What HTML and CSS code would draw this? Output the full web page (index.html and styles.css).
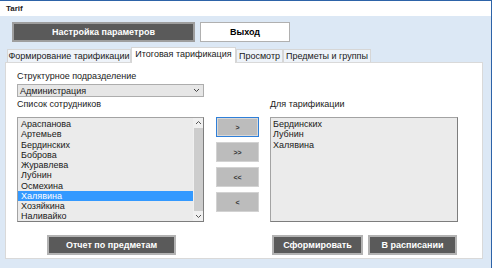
FILE: index.html
```html
<!doctype html>
<html lang="ru">
<head>
	<meta charset="UTF-8">
	<title>Tarif</title>
	<link rel="stylesheet" href="styles.css">
</head>
<body>
	<div class="window">
		<div class="titlebar">Tarif</div>
		<div class="toolbar">
			<span class="btn dark settings">Настройка параметров</span>
			<span class="btn exit">Выход</span>
		</div>
		<ul class="tabs">
			<li class="t1">Формирование тарификации</li>
			<li class="t2 active">Итоговая тарификация</li>
			<li class="t3">Просмотр</li>
			<li class="t4">Предметы и группы</li>
		</ul>
		<div class="panel">
			<p class="label">Структурное подразделение</p>
			<div class="combo">
				<span>Администрация</span>
				<svg width="7" height="5" viewBox="0 0 7 5"><polyline points="1,1 3.5,3.5 6,1" fill="none" stroke="#444" stroke-width="1"/></svg>
			</div>
			<div class="lists">
				<div class="col">
					<p class="label">Список сотрудников</p>
					<div class="listbox left">
						<ul class="items">
							<li>Араспанова</li>
							<li>Артемьев</li>
							<li>Бердинских</li>
							<li>Боброва</li>
							<li>Журавлева</li>
							<li>Лубнин</li>
							<li>Осмехина</li>
							<li class="sel">Халявина</li>
							<li>Хозяйкина</li>
							<li>Наливайко</li>
						</ul>
						<div class="scroll">
							<svg width="9" height="9" viewBox="0 0 9 9"><polyline points="2,6 4.5,3.5 7,6" fill="none" stroke="#555" stroke-width="1"/></svg>
							<div class="thumb"></div>
							<svg width="9" height="9" viewBox="0 0 9 9"><polyline points="2,3 4.5,5.5 7,3" fill="none" stroke="#555" stroke-width="1"/></svg>
						</div>
					</div>
				</div>
				<div class="moves">
					<span class="mv focus">&gt;</span>
					<span class="mv">&gt;&gt;</span>
					<span class="mv">&lt;&lt;</span>
					<span class="mv">&lt;</span>
				</div>
				<div class="col">
					<p class="label">Для тарификации</p>
					<div class="listbox right">
						<ul class="items">
							<li>Бердинских</li>
							<li>Лубнин</li>
							<li>Халявина</li>
						</ul>
					</div>
				</div>
			</div>
			<div class="actions">
				<span class="btn dark report">Отчет по предметам</span>
				<span class="btn dark make">Сформировать</span>
				<span class="btn dark sched">В расписании</span>
			</div>
		</div>
	</div>
</body>
</html>
```

FILE: styles.css
```css
html, body, div, p, ul, li, span {
	margin: 0;
	padding: 0;
}
body {
	background-color: #fff;
	font-family: "Liberation Sans", Arial, sans-serif;
	font-size: 9px;
	color: #1a1a1a;
}
ul {
	list-style: none;
}
.window {
	width: 491px;
	height: 268px;
	border-right: 1px solid #2d63a8;
	background-color: #dce8f5;
}
.titlebar {
	height: 15px;
	line-height: 15px;
	padding-left: 6px;
	border-top: 1px solid #2d63a8;
	font-size: 8px;
	font-weight: bold;
	color: #222;
	background-color: #fff;
}
.toolbar {
	display: flex;
	gap: 5px;
	padding: 6px 0 0 12px;
}
.btn {
	display: flex;
	align-items: center;
	justify-content: center;
	box-sizing: border-box;
	height: 20px;
	font-weight: bold;
}
.dark {
	color: #fff;
	background-color: #5a5a5a;
	border: 2px solid #b3b3b3;
}
.settings {
	width: 183px;
	border-color: #9e9e9e;
}
.exit {
	width: 90px;
	color: #000;
	background-color: #fff;
	border: 1px solid #b0b0b0;
}
.tabs {
	display: flex;
	align-items: flex-end;
	height: 15px;
	margin: 5px 0 0 7px;
}
.tabs li {
	box-sizing: border-box;
	height: 13px;
	line-height: 12px;
	text-align: center;
	border: 1px solid #d6d6d6;
	border-bottom: none;
	background-color: #eef3f9;
}
.tabs .active {
	position: relative;
	z-index: 1;
	height: 16px;
	line-height: 13px;
	margin-bottom: -1px;
	background-color: #fff;
}
.t1 { width: 124px; }
.t2 { width: 105px; }
.t3 { width: 47px; }
.t4 { width: 88px; }
.panel {
	box-sizing: border-box;
	width: 478px;
	height: 197px;
	margin-left: 5px;
	padding: 7px 0 0 11px;
	border: 1px solid #d9d9d9;
	background-color: #fff;
}
.label {
	line-height: 12px;
}
.combo {
	display: flex;
	align-items: center;
	justify-content: space-between;
	box-sizing: border-box;
	width: 187px;
	height: 13px;
	margin-top: 2px;
	padding: 0 3px 0 2px;
	border: 1px solid #adadad;
	background-color: #e6e6e6;
}
.lists {
	display: flex;
	margin-top: 1px;
}
.listbox {
	display: flex;
	box-sizing: border-box;
	height: 105px;
	margin-top: 7px;
	border: 1px solid #a3a3a3;
	border-right-color: #7d7d7d;
	border-bottom-color: #7d7d7d;
	background-color: #ebebeb;
}
.left { width: 187px; }
.right { width: 188px; }
.items {
	flex: 1;
	padding-top: 1px;
}
.items li {
	height: 10.25px;
	line-height: 10px;
	padding-left: 2px;
}
.left .items li { padding-left: 3px; }
.items .sel {
	color: #fff;
	background-color: #3399ff;
}
.scroll {
	display: flex;
	flex-direction: column;
	align-items: center;
	width: 10px;
	background-color: #f0f0f0;
}
.thumb {
	flex: 1;
	width: 9px;
	margin: 1px 0;
	background-color: #cdcdcd;
}
.moves {
	display: flex;
	flex-direction: column;
	gap: 5px;
	width: 43px;
	margin: 0 11px 0 12px;
	padding-top: 19px;
}
.mv {
	display: flex;
	align-items: center;
	justify-content: center;
	box-sizing: border-box;
	height: 20px;
	font-size: 7px;
	font-weight: bold;
	color: #333;
	background-color: #bcbcbc;
	border: 1px solid #d2d2d2;
}
.mv.focus {
	border: 1px solid #2f7fd8;
	box-shadow: inset 0 0 0 1px #d8d8d8;
}
.actions {
	display: flex;
	margin-top: 13px;
}
.report {
	width: 129px;
	margin-left: 30px;
}
.make {
	width: 91px;
	margin-left: 96px;
}
.sched {
	width: 89px;
	margin-left: 5px;
}
```
